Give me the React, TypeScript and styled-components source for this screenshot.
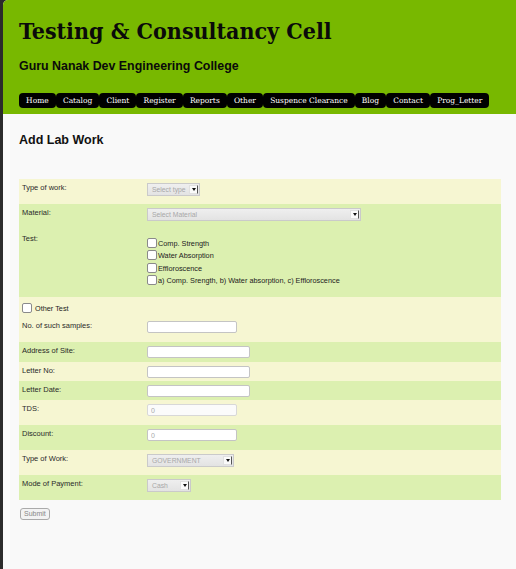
import React from "react";
import styled, { createGlobalStyle } from "styled-components";

const Global = createGlobalStyle`
  html, body { margin: 0; padding: 0; background: #2b2b2b; }
  body { font-family: "Liberation Sans", Arial, sans-serif; }
  * { box-sizing: border-box; }
`;

const Page = styled.div`
  padding-left: 3px;
  min-height: 569px;
  background: #2b2b2b;
`;

const Sheet = styled.div`
  border-radius: 5px 0 0 0;
  overflow: hidden;
  min-height: 569px;
  background: #f9f9f9;
  display: flex;
  flex-direction: column;
`;

const Header = styled.header`
  background: #78b800;
  padding: 17px 16px 6px 16px;
`;

const Title = styled.h1`
  margin: 0;
  font-family: "DejaVu Serif Condensed", "DejaVu Serif", serif;
  font-stretch: condensed;
  font-weight: bold;
  font-size: 23px;
  line-height: 28px;
  color: #0a0a0a;
`;

const Subtitle = styled.div`
  margin-top: 14px;
  font-family: "Liberation Sans", Arial, sans-serif;
  font-weight: bold;
  font-size: 12.4px;
  line-height: 15px;
  color: #0a0a0a;
`;

const Nav = styled.nav`
  margin-top: 19px;
  display: flex;
`;

const NavItem = styled.a`
  display: block;
  height: 15px;
  line-height: 15px;
  padding: 0 7.1px;
  background: #000;
  color: #fff;
  border-radius: 4px;
  font-family: "DejaVu Serif", serif;
  font-size: 7.5px;
  text-decoration: none;
  white-space: nowrap;
`;

const Content = styled.main`
  padding: 19px 15px 40px 16px;
  flex: 1;
`;

const Heading = styled.h2`
  margin: 0;
  font-family: "Liberation Sans", Arial, sans-serif;
  font-weight: bold;
  font-size: 12.5px;
  line-height: 15px;
  color: #111;
`;

const Form = styled.form`
  margin-top: 31px;
`;

const Table = styled.div`
  display: flex;
  flex-direction: column;
`;

const Row = styled.div<{ $tone: "y" | "g"; $h: number }>`
  display: grid;
  grid-template-columns: 128px 1fr;
  align-items: start;
  min-height: ${(p) => p.$h}px;
  background: ${(p) => (p.$tone === "y" ? "#f6f6d2" : "#dcf0b0")};
  padding-top: 4px;
`;

const FullRow = styled.div<{ $tone: "y" | "g"; $h: number }>`
  min-height: ${(p) => p.$h}px;
  background: ${(p) => (p.$tone === "y" ? "#f6f6d2" : "#dcf0b0")};
  padding: 3px 0 0 3px;
`;

const Label = styled.label`
  padding-left: 3px;
  font-size: 7.5px;
  line-height: 9px;
  color: #2a2a2a;
`;

const Field = styled.div`
  display: flex;
  flex-direction: column;
`;

const SelectBox = styled.div<{ $w: number }>`
  width: ${(p) => p.$w}px;
  height: 13px;
  display: flex;
  align-items: center;
  justify-content: space-between;
  padding: 0 1px 0 4px;
  background: linear-gradient(#efefef, #e3e3e3);
  border: 1px solid #cacaca;
  font-size: 6.8px;
  color: #a8a8a8;
  white-space: nowrap;
  overflow: hidden;
`;

const Arrow = styled.span`
  width: 9px;
  height: 9px;
  flex: none;
  display: flex;
  align-items: center;
  justify-content: center;
  background: #fafafa;
  border: 1px solid #e0e0e0;
  border-right: 1px solid #555;
`;

const TextInput = styled.input<{ $w: number }>`
  width: ${(p) => p.$w}px;
  height: 12px;
  margin: 0;
  padding: 0 0 0 3px;
  border: 1px solid #c4c4c4;
  border-radius: 2px;
  background: #fff;
  font-family: "Liberation Sans", Arial, sans-serif;
  font-size: 7px;
  color: #aaa;
  outline: none;
  &:disabled { background: #fbfbfb; border-color: #d8d8d8; }
`;

const CheckLine = styled.label`
  display: flex;
  align-items: flex-end;
  height: 12.5px;
  font-size: 7.3px;
  line-height: 8px;
  color: #222;
`;

const Box = styled.input`
  appearance: none;
  width: 10px;
  height: 10px;
  margin: 0 1px 0 0;
  border: 1px solid #8a8a8a;
  border-radius: 2px;
  background: #fff;
  flex: none;
`;

const Checks = styled.div`
  padding-top: 1px;
`;

const SubmitButton = styled.button`
  margin-top: 8px;
  margin-left: 1px;
  height: 12px;
  padding: 0 3px;
  border: 1px solid #aaa;
  border-radius: 3px;
  background: #f3f3f3;
  font-family: "Liberation Sans", Arial, sans-serif;
  font-size: 7px;
  line-height: 10px;
  color: #888;
`;

const ArrowIcon = () => (
  <svg width="4" height="3" viewBox="0 0 4 3">
    <path d="M0 0h4L2 3z" fill="#111" />
  </svg>
);

const Select = ({ w, text }: { w: number; text: string }) => (
  <SelectBox $w={w}>
    <span>{text}</span>
    <Arrow>
      <ArrowIcon />
    </Arrow>
  </SelectBox>
);

const navItems = [
  "Home",
  "Catalog",
  "Client",
  "Register",
  "Reports",
  "Other",
  "Suspence Clearance",
  "Blog",
  "Contact",
  "Prog_Letter",
];

const tests = [
  "Comp. Strength",
  "Water Absorption",
  "Effloroscence",
  "a) Comp. Srength, b) Water absorption, c) Effloroscence",
];

export default function App() {
  return (
    <>
      <Global />
      <Page>
        <Sheet>
          <Header>
            <Title>Testing &amp; Consultancy Cell</Title>
            <Subtitle>Guru Nanak Dev Engineering College</Subtitle>
            <Nav>
              {navItems.map((n) => (
                <NavItem key={n} href="#">
                  {n}
                </NavItem>
              ))}
            </Nav>
          </Header>
          <Content>
            <Heading>Add Lab Work</Heading>
            <Form onSubmit={(e) => e.preventDefault()}>
              <Table>
                <Row $tone="y" $h={25}>
                  <Label>Type of work:</Label>
                  <Field>
                    <Select w={53} text="Select type" />
                  </Field>
                </Row>
                <Row $tone="g" $h={26}>
                  <Label>Material:</Label>
                  <Field>
                    <Select w={214} text="Select Material" />
                  </Field>
                </Row>
                <Row $tone="g" $h={67}>
                  <Label>Test:</Label>
                  <Checks>
                    {tests.map((t) => (
                      <CheckLine key={t}>
                        <Box type="checkbox" />
                        {t}
                      </CheckLine>
                    ))}
                  </Checks>
                </Row>
                <FullRow $tone="y" $h={20}>
                  <CheckLine>
                    <Box type="checkbox" />
                    &nbsp;Other Test
                  </CheckLine>
                </FullRow>
                <Row $tone="y" $h={25}>
                  <Label>No. of such samples:</Label>
                  <Field>
                    <TextInput $w={90} />
                  </Field>
                </Row>
                <Row $tone="g" $h={20}>
                  <Label>Address of Site:</Label>
                  <Field>
                    <TextInput $w={103} />
                  </Field>
                </Row>
                <Row $tone="y" $h={19}>
                  <Label>Letter No:</Label>
                  <Field>
                    <TextInput $w={103} />
                  </Field>
                </Row>
                <Row $tone="g" $h={19}>
                  <Label>Letter Date:</Label>
                  <Field>
                    <TextInput $w={103} />
                  </Field>
                </Row>
                <Row $tone="y" $h={25}>
                  <Label>TDS:</Label>
                  <Field>
                    <TextInput $w={90} defaultValue="0" disabled />
                  </Field>
                </Row>
                <Row $tone="g" $h={25}>
                  <Label>Discount:</Label>
                  <Field>
                    <TextInput $w={90} defaultValue="0" />
                  </Field>
                </Row>
                <Row $tone="y" $h={25}>
                  <Label>Type of Work:</Label>
                  <Field>
                    <Select w={87} text="GOVERNMENT" />
                  </Field>
                </Row>
                <Row $tone="g" $h={25}>
                  <Label>Mode of Payment:</Label>
                  <Field>
                    <Select w={44} text="Cash" />
                  </Field>
                </Row>
              </Table>
              <SubmitButton type="submit">Submit</SubmitButton>
            </Form>
          </Content>
        </Sheet>
      </Page>
    </>
  );
}
